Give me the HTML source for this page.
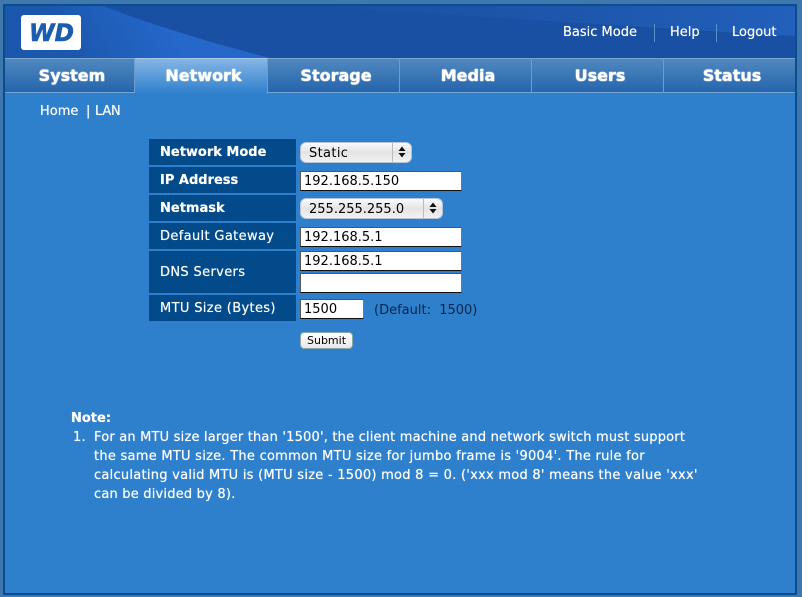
<!DOCTYPE html>
<html><head><meta charset="utf-8"><style>
html,body{margin:0;padding:0}
body{width:802px;height:597px;position:relative;overflow:hidden;background:#3f78ad;font-family:"DejaVu Sans",sans-serif;color:#fff}
.a{position:absolute;white-space:nowrap}
#frame{left:3px;top:4px;width:794px;height:591px;background:#2e80cd;box-sizing:border-box;border:2px solid #0a4c90}
.tab{position:absolute;top:58px;height:35px;box-sizing:border-box;background:linear-gradient(#5088bf,#2565ad);border-top:1px solid #7ba6d0;border-bottom:1px solid #76a6d6;border-right:1px solid #6d9dcc;text-align:center;font-weight:bold;font-size:16px;line-height:33px;padding-left:5px;text-shadow:0 0 1px #fff,0 0 1px #fff}
.lab{position:absolute;left:149px;width:147px;background:#034a8a;font-size:13px;padding-left:11px;box-sizing:border-box;letter-spacing:.35px;text-shadow:0 0 .5px #fff}
.b{font-weight:bold;letter-spacing:0}
.inp{position:absolute;left:300px;width:162px;height:20px;box-sizing:border-box;background:#fff;border:1px solid #555;border-bottom:1px solid #111;border-right:1px solid #777;color:#000;font-size:13px;line-height:20px;padding-left:3px}
.sel{position:absolute;left:300px;height:21px;box-sizing:border-box;border-radius:6px;background:linear-gradient(#fafafa,#e4e4e4 50%,#f2f2f2);border:1px solid #b5c4d4;color:#000;font-size:13px;line-height:21px;padding-left:8px}
.sel i{position:absolute;right:0;top:0;bottom:0;width:18px;border-left:1px solid #bbb}
.sel svg{position:absolute;left:5px;top:3px}
.n{position:absolute;left:94px;font-size:13px;line-height:19px;white-space:nowrap;letter-spacing:.2px;text-shadow:0 0 .6px #fff}
.t{font-size:13px;line-height:16px;text-shadow:0 0 .5px #fff}
</style></head><body>
<div id="frame" class="a"></div>
<svg class="a" style="left:5px;top:6px" width="790" height="52" viewBox="0 0 790 52">
<defs>
<linearGradient id="l" gradientUnits="userSpaceOnUse" x1="170" y1="25" x2="80" y2="70"><stop offset="0" stop-color="#2568c9"/><stop offset=".5" stop-color="#2060bd"/><stop offset="1" stop-color="#1c57ae"/></linearGradient>
<linearGradient id="tr" x1="0" y1="0" x2="1" y2="0"><stop offset="0" stop-color="#1a50a3"/><stop offset=".6" stop-color="#1e57ae"/><stop offset="1" stop-color="#2260bb"/></linearGradient>
</defs>
<rect width="790" height="52" fill="#1a50a3"/>
<path d="M300 0H790V30C650 22 470 10 300 0Z" fill="url(#tr)"/>
<path d="M0 0H98C150 20 210 38 265 52H0Z" fill="url(#l)"/>
</svg>
<div class="a" style="left:21px;top:15px;width:60px;height:35px;background:#fff;border-radius:3px"></div>
<svg class="a" style="left:21px;top:15px" width="60" height="35" viewBox="0 0 60 35"><text x="8" y="26" font-family="DejaVu Sans" font-weight="bold" font-style="italic" font-size="24" textLength="45" lengthAdjust="spacingAndGlyphs" fill="#1c5cb0" stroke="#1c5cb0" stroke-width=".6">WD</text></svg>
<div class="a t" style="left:563px;top:25px">Basic Mode</div>
<div class="a" style="left:654px;top:24px;width:1px;height:18px;background:#5a8fca"></div>
<div class="a t" style="left:670px;top:25px">Help</div>
<div class="a" style="left:716px;top:24px;width:1px;height:18px;background:#5a8fca"></div>
<div class="a t" style="left:732px;top:25px">Logout</div>

<div class="tab" style="left:5px;width:130px">System</div>
<div class="tab" style="left:135px;width:133px;height:36px;background:linear-gradient(#85b5e4,#2e80cd);border-bottom:0;border-top-color:#a5c8ea">Network</div>
<div class="tab" style="left:268px;width:132px">Storage</div>
<div class="tab" style="left:400px;width:132px">Media</div>
<div class="tab" style="left:532px;width:132px">Users</div>
<div class="tab" style="left:664px;width:131px;border-right:0">Status</div>

<div class="a t" style="left:40px;top:104px">Home</div>
<div class="a t" style="left:86px;top:104px">|</div>
<div class="a t" style="left:95px;top:104px;letter-spacing:-.2px">LAN</div>

<div class="lab b" style="top:139px;height:26px;line-height:28px">Network Mode</div>
<div class="lab b" style="top:167px;height:26px;line-height:28px">IP Address</div>
<div class="lab b" style="top:195px;height:26px;line-height:28px">Netmask</div>
<div class="lab" style="top:223px;height:26px;line-height:28px">Default Gateway</div>
<div class="lab" style="top:251px;height:42px;line-height:44px">DNS Servers</div>
<div class="lab" style="top:295px;height:26px;line-height:27px">MTU Size (Bytes)</div>

<div class="sel" style="top:142px;width:112px;letter-spacing:.35px">Static<i><svg width="8" height="12" viewBox="0 0 8 12"><path d="M4 .5L7.5 5H.5ZM4 11.5L.5 7H7.5Z" fill="#111"/></svg></i></div>
<div class="inp" style="top:171px">192.168.5.150</div>
<div class="sel" style="top:198px;width:143px">255.255.255.0<i><svg width="8" height="12" viewBox="0 0 8 12"><path d="M4 .5L7.5 5H.5ZM4 11.5L.5 7H7.5Z" fill="#111"/></svg></i></div>
<div class="inp" style="top:227px">192.168.5.1</div>
<div class="inp" style="top:251px">192.168.5.1</div>
<div class="inp" style="top:273px"></div>
<div class="inp" style="top:299px;width:64px">1500</div>
<div class="a" style="left:374px;top:303px;font-size:13px;line-height:16px;color:#06264a">(Default:&nbsp; 1500)</div>
<div class="a" style="left:300px;top:332px;width:53px;height:17px;box-sizing:border-box;border:1px solid #8aa;border-radius:4px;background:linear-gradient(#fff,#e8e8e8);color:#000;font-size:11px;line-height:16px;text-align:center">Submit</div>

<div class="a b" style="left:71px;top:411px;font-size:13px;line-height:16px;text-shadow:0 0 .5px #fff">Note:</div>
<div class="n" style="left:73px;top:428px">1.</div>
<div class="n" style="top:428px;letter-spacing:.19px">For an MTU size larger than '1500', the client machine and network switch must support</div>
<div class="n" style="top:447px;letter-spacing:.26px">the same MTU size. The common MTU size for jumbo frame is '9004'. The rule for</div>
<div class="n" style="top:466px;letter-spacing:.26px">calculating valid MTU is (MTU size - 1500) mod 8 = 0. ('xxx mod 8' means the value 'xxx'</div>
<div class="n" style="top:485px">can be divided by 8).</div>
</body></html>
